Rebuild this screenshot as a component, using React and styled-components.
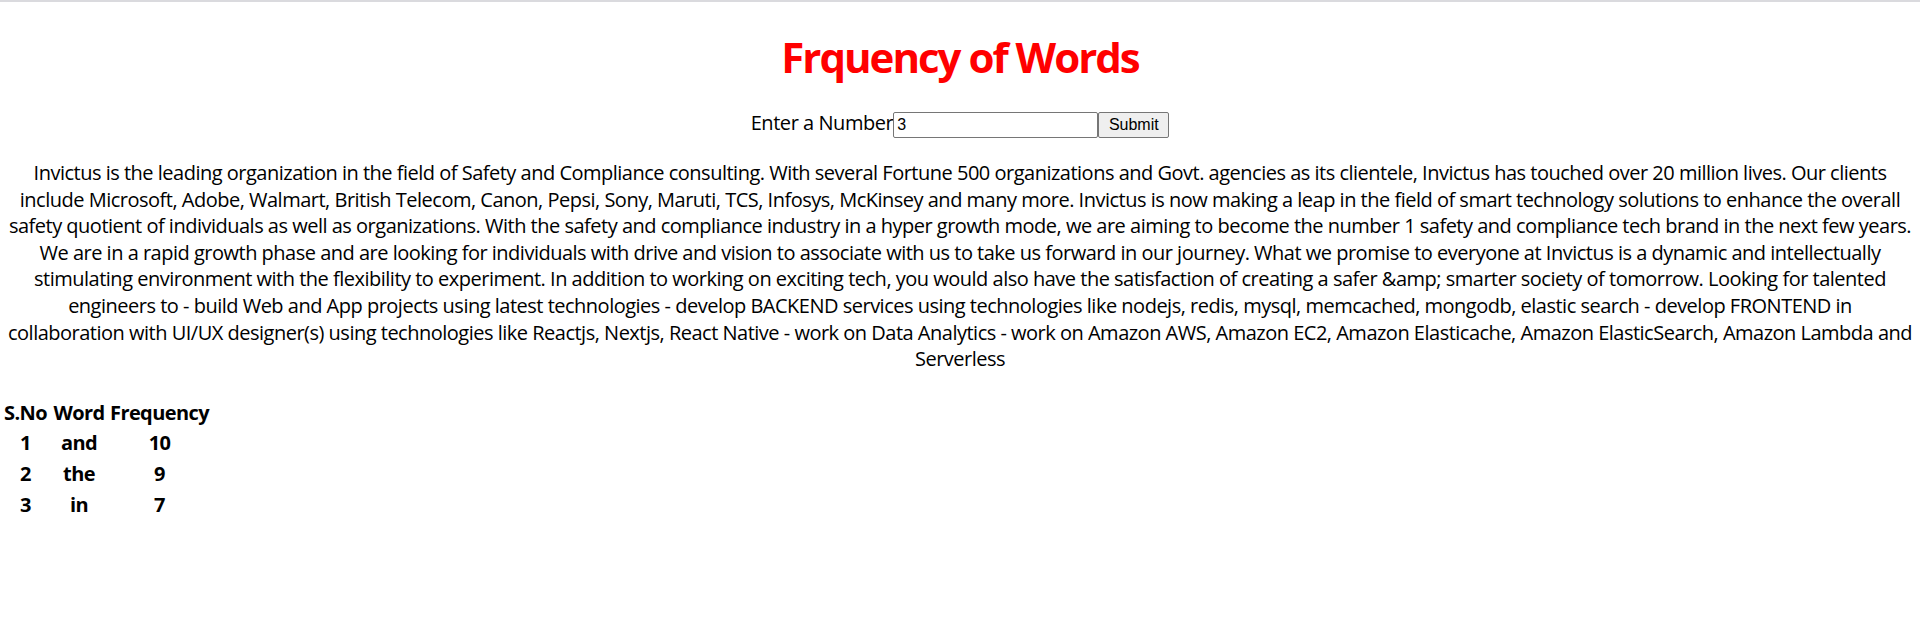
import React, { useState } from 'react';
import styled, { createGlobalStyle } from 'styled-components';

const GlobalStyle = createGlobalStyle`
  body {
    margin: 0;
    background: #ffffff;
    color: #000000;
    font-family: "Open Sans", "Noto Sans", sans-serif;
  }
`;

const TopBar = styled.div`
  height: 2px;
  background: #dadade;
`;

const Title = styled.h1`
  margin: 25px 0 23px;
  color: #ff0000;
  font-size: 42px;
  line-height: 60px;
  font-weight: 700;
  letter-spacing: -2px;
  text-align: center;
`;

const Form = styled.form`
  display: flex;
  justify-content: center;
  align-items: baseline;
  font-size: 20px;
  line-height: 26px;
  letter-spacing: -0.45px;
`;

const Label = styled.label`
  white-space: nowrap;
`;

const NumberInput = styled.input`
  box-sizing: border-box;
  width: 205px;
  height: 26px;
  padding: 1px 3px;
  border: 1px solid #767676;
  border-radius: 2px;
  font-family: "Liberation Sans", Arial, sans-serif;
  font-size: 16px;
  letter-spacing: 0;
  color: #000;
`;

const SubmitButton = styled.button`
  box-sizing: border-box;
  height: 26px;
  width: 71px;
  padding: 1px 7px;
  border: 1px solid #767676;
  border-radius: 2px;
  background: #efefef;
  font-family: "Liberation Sans", Arial, sans-serif;
  font-size: 16px;
  letter-spacing: 0;
  color: #000;
`;

const About = styled.p`
  margin: 22px 0 0;
  font-size: 20px;
  line-height: 26.6px;
  letter-spacing: -0.5px;
  text-align: center;
`;

const Line = styled.span`
  display: block;
  white-space: nowrap;
`;

const Table = styled.table`
  margin-top: 24px;
  border-spacing: 2px;
  font-size: 20px;
  line-height: 26.6px;
  font-weight: 700;
  letter-spacing: -0.6px;
`;

const Cell = styled.td`
  padding: 1px;
  text-align: center;
  white-space: nowrap;
  width: ${(p) => p.$w || 'auto'};
`;

const HeadCell = styled(Cell).attrs({ as: 'th' })``;

const lines = [
  'Invictus is the leading organization in the field of Safety and Compliance consulting. With several Fortune 500 organizations and Govt. agencies as its clientele, Invictus has touched over 20 million lives. Our clients',
  'include Microsoft, Adobe, Walmart, British Telecom, Canon, Pepsi, Sony, Maruti, TCS, Infosys, McKinsey and many more. Invictus is now making a leap in the field of smart technology solutions to enhance the overall',
  'safety quotient of individuals as well as organizations. With the safety and compliance industry in a hyper growth mode, we are aiming to become the number 1 safety and compliance tech brand in the next few years.',
  'We are in a rapid growth phase and are looking for individuals with drive and vision to associate with us to take us forward in our journey. What we promise to everyone at Invictus is a dynamic and intellectually',
  'stimulating environment with the flexibility to experiment. In addition to working on exciting tech, you would also have the satisfaction of creating a safer &amp; smarter society of tomorrow. Looking for talented',
  'engineers to - build Web and App projects using latest technologies - develop BACKEND services using technologies like nodejs, redis, mysql, memcached, mongodb, elastic search - develop FRONTEND in',
  'collaboration with UI/UX designer(s) using technologies like Reactjs, Nextjs, React Native - work on Data Analytics - work on Amazon AWS, Amazon EC2, Amazon Elasticache, Amazon ElasticSearch, Amazon Lambda and',
  'Serverless',
];

const results = [
  { word: 'and', count: 10 },
  { word: 'the', count: 9 },
  { word: 'in', count: 7 },
];

export default function App() {
  const [num, setNum] = useState('3');

  return (
    <>
      <GlobalStyle />
      <TopBar />
      <Title>Frquency of Words</Title>
      <Form onSubmit={(e) => e.preventDefault()}>
        <Label htmlFor="num">Enter a Number</Label>
        <NumberInput id="num" type="text" value={num} onChange={(e) => setNum(e.target.value)} />
        <SubmitButton type="submit">Submit</SubmitButton>
      </Form>
      <About>
        {lines.map((l, i) => (
          <Line key={i}>{l}</Line>
        ))}
      </About>
      <Table>
        <thead>
          <tr>
            <HeadCell $w="45px">S.No</HeadCell>
            <HeadCell $w="54px">Word</HeadCell>
            <HeadCell $w="99px">Frequency</HeadCell>
          </tr>
        </thead>
        <tbody>
          {results.map((r, i) => (
            <tr key={r.word}>
              <Cell>{i + 1}</Cell>
              <Cell>{r.word}</Cell>
              <Cell>{r.count}</Cell>
            </tr>
          ))}
        </tbody>
      </Table>
    </>
  );
}
